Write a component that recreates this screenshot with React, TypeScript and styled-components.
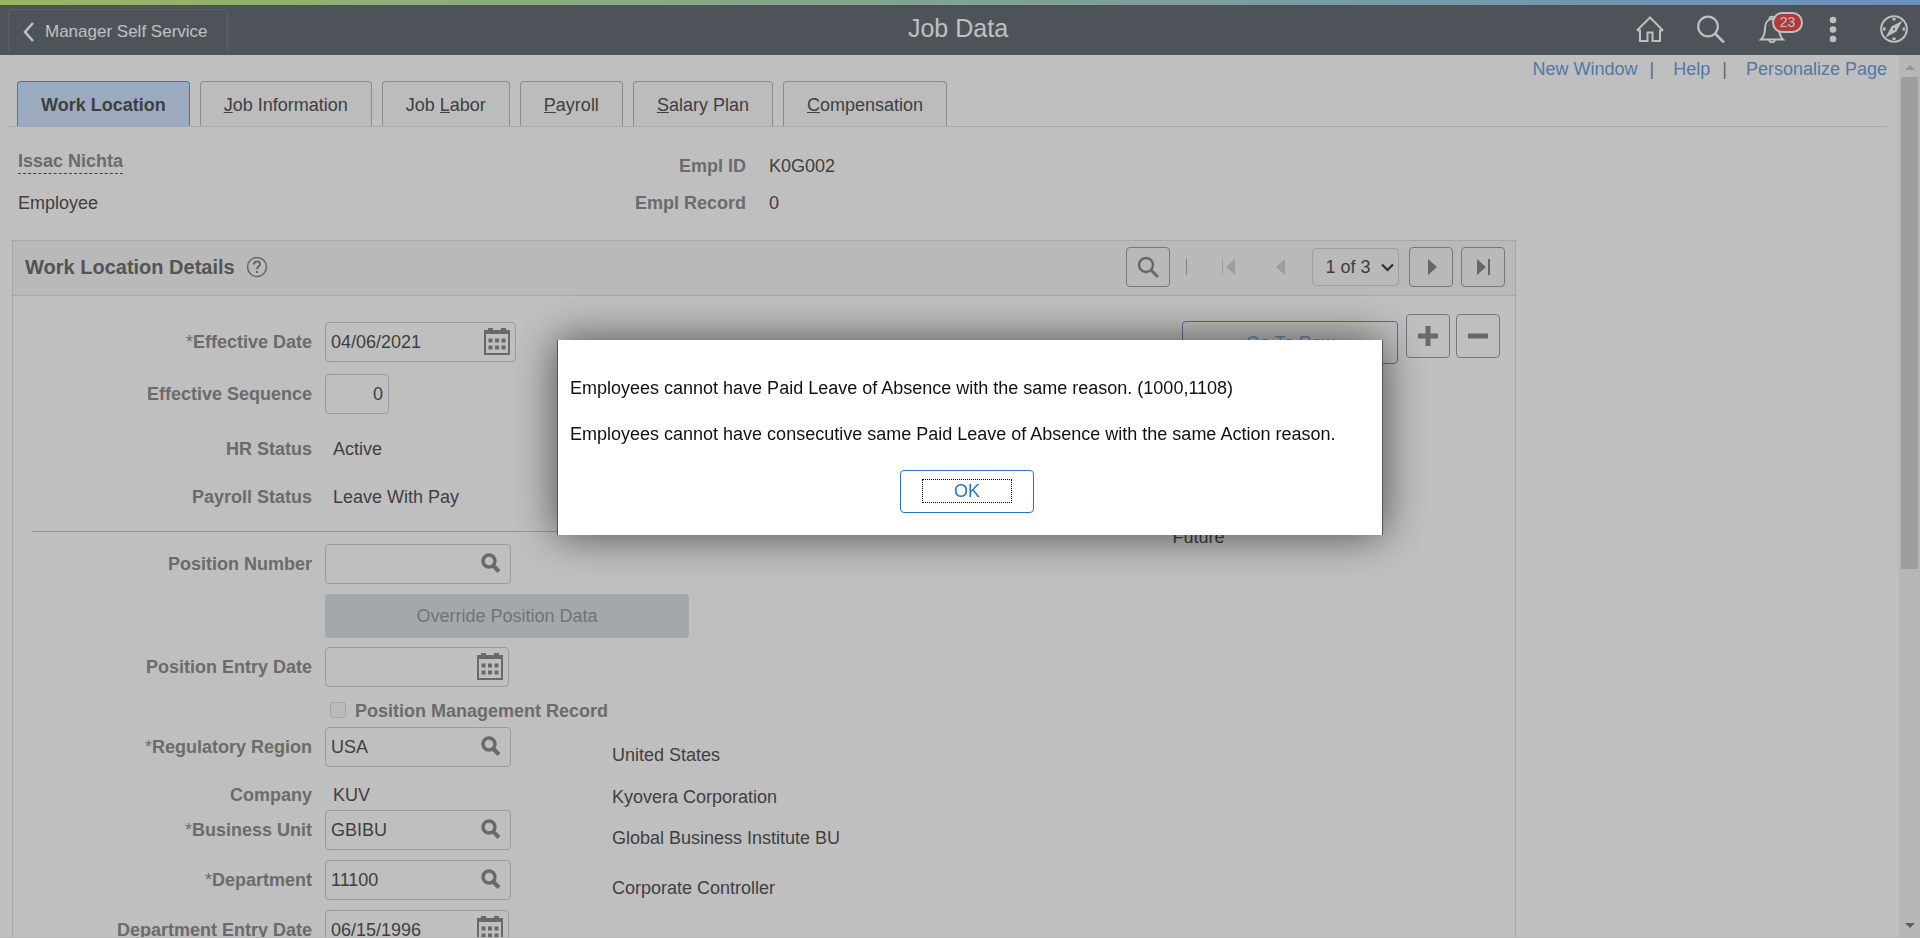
import React from "react";
import styled, { createGlobalStyle } from "styled-components";

const GlobalStyle = createGlobalStyle`
  *, *::before, *::after { box-sizing: border-box; }
  body {
    margin: 0;
    background: #fff;
    color: #555;
    font-family: "Liberation Sans", Arial, sans-serif;
    font-size: 18px;
    line-height: 24px;
  }
  button, input, select { font: inherit; color: inherit; }
  button { cursor: pointer; }
`;

const Shell = styled.div`
  display: flex;
  flex-direction: column;
  height: 100vh;
  overflow: hidden;
`;

const AccentStrip = styled.div`
  flex: none;
  height: 5px;
  background: linear-gradient(90deg, #c9f387, #8ec0ff);
`;

const Header = styled.header`
  flex: none;
  display: grid;
  grid-template-columns: 1fr auto 1fr;
  align-items: center;
  height: 50px;
  padding: 0 12px 0 8px;
  background: #686f78;
  color: #fff;
`;

const BackButton = styled.button`
  justify-self: start;
  display: flex;
  align-items: center;
  gap: 10px;
  height: 42px;
  padding: 3px 19px 0 14px;
  background: transparent;
  border: 1px solid #7b7f84;
  border-bottom: 0;
  border-radius: 4px 4px 0 0;
  font-size: 17px;
`;

const PageTitle = styled.h1`
  margin: 0;
  padding-bottom: 4px;
  font-size: 25px;
  font-weight: 400;
  line-height: 30px;
`;

const HeaderActions = styled.nav`
  justify-self: end;
  display: flex;
  gap: 33px;
  padding-bottom: 2px;
`;

const HeaderButton = styled.button`
  position: relative;
  display: flex;
  align-items: center;
  justify-content: center;
  width: 28px;
  height: 28px;
  padding: 0;
  background: none;
  border: 0;
`;

const Badge = styled.span`
  position: absolute;
  top: -3px;
  left: 14px;
  width: 31px;
  height: 21px;
  border: 2px solid #fff;
  border-radius: 11px;
  background: #ee4c4c;
  font-size: 14px;
  line-height: 17px;
  text-align: center;
`;

const Workspace = styled.div`
  flex: 1;
  min-height: 0;
  display: flex;
  border-bottom: 1px solid #f2f2f2;
`;

const Content = styled.main`
  flex: 1;
  min-width: 0;
  overflow: hidden;
  padding: 0 12px 0 9px;
`;

const ScrollTrack = styled.div`
  flex: none;
  display: flex;
  flex-direction: column;
  align-items: center;
  justify-content: space-between;
  width: 21px;
  padding: 10px 2px 9px;
  background: #f4f4f4;
`;

const ScrollThumb = styled.div`
  width: 17px;
  height: 57%;
  margin: 7px 0 auto;
  background: #d3d3d3;
`;

const PageLinks = styled.div`
  display: flex;
  justify-content: flex-end;
  height: 26px;
  padding-top: 2px;
`;

const PageLink = styled.a`
  color: #709fe0;
  text-decoration: none;
  &:not(:last-child)::after {
    content: "|";
    padding: 0 19px 0 12px;
    color: #8a8a8a;
  }
`;

const TabBar = styled.div`
  display: flex;
  gap: 10px;
  padding-left: 8px;
  border-bottom: 1px solid #e0e0e0;
`;

const Tab = styled.button<{ $active?: boolean }>`
  height: 45px;
  padding: 2px 23px 0;
  border: 1px solid ${(p) => (p.$active ? "#659bd5" : "#bababa")};
  border-bottom: 0;
  border-radius: 4px 4px 0 0;
  background: ${(p) => (p.$active ? "#cfe4fc" : "#fbfbfb")};
  font-weight: ${(p) => (p.$active ? 700 : 400)};
`;

const Identity = styled.section`
  display: grid;
  grid-template-columns: 600px 128px auto;
  justify-content: start;
  row-gap: 8px;
  height: 113px;
  padding: 22px 0 0 9px;
  align-content: start;
  align-items: start;
`;

const PersonName = styled.span`
  justify-self: start;
  border-bottom: 1px dashed #555;
  color: #8f8f8f;
  font-weight: 700;
`;

const IdentityText = styled.span<{ $label?: boolean }>`
  padding-top: 5px;
  color: ${(p) => (p.$label ? "#8f8f8f" : "#555")};
  font-weight: ${(p) => (p.$label ? 700 : 400)};
  text-align: ${(p) => (p.$label ? "right" : "left")};
  padding-left: ${(p) => (p.$label ? 0 : 23)}px;
`;

const JobType = styled.span`
  padding-top: 5px;
`;

const Panel = styled.section`
  width: calc(80% + 2px);
  margin-left: 3px;
  border: 1px solid #e1e1e1;
`;

const PanelHeader = styled.div`
  display: flex;
  align-items: center;
  height: 55px;
  padding: 0 10px 2px 12px;
  background: #f7f7f7;
  border-bottom: 1px solid #e1e1e1;
`;

const PanelTitle = styled.h2`
  margin: 0 11px 0 0;
  color: #717171;
  font-size: 20px;
`;

const HelpButton = styled.button`
  display: flex;
  margin-right: auto;
  padding: 0;
  background: none;
  border: 0;
`;

const Pager = styled.div`
  display: flex;
  align-items: center;
`;

const SquareButton = styled.button<{ $tall?: boolean }>`
  display: flex;
  align-items: center;
  justify-content: center;
  width: 44px;
  height: ${(p) => (p.$tall ? 44 : 40)}px;
  padding: 0;
  border: 1px solid #9ca0a7;
  border-radius: 4px;
  background: transparent;
`;

const PagerDivider = styled.span`
  width: 1px;
  height: 16px;
  margin: 0 34px 0 16px;
  background: #b5b0a8;
`;

const PlainButton = styled.button`
  display: flex;
  width: 15px;
  margin-right: 35px;
  padding: 0;
  background: none;
  border: 0;
`;

const SelectWrap = styled.label`
  position: relative;
  display: flex;
  align-items: center;
  margin: 0 10px 0 -9px;
`;

const RowSelect = styled.select`
  appearance: none;
  width: 87px;
  height: 38px;
  padding: 0 0 0 12px;
  border: 1px solid #d3d3da;
  border-radius: 4px;
  background: transparent;
`;

const Chevron = styled.svg`
  position: absolute;
  right: 5px;
  pointer-events: none;
`;

const LastButton = styled(SquareButton)`
  margin-left: 8px;
`;

const PanelBody = styled.div`
  display: grid;
  grid-template-columns: 1fr auto;
  padding: 26px 15px 0 19px;
`;

const Form = styled.form`
  display: flex;
  flex-direction: column;
  min-width: 0;
`;

const Row = styled.div<{ $gap: number; $height?: number }>`
  display: grid;
  grid-template-columns: 280px 287px auto;
  align-items: center;
  justify-content: start;
  height: ${(p) => p.$height ?? 40}px;
  margin-top: ${(p) => p.$gap}px;
`;

const FieldLabel = styled.label`
  color: #8f8f8f;
  font-weight: 700;
  text-align: right;
`;

const FieldCell = styled.div`
  padding-left: 13px;
  white-space: nowrap;
`;

const FieldValue = styled.span`
  padding-left: 8px;
`;

const Required = styled.span`
  font-weight: 400;
`;

const Description = styled.span`
  align-self: end;
  padding-left: 13px;
`;

const InputBox = styled.div<{ $width: number; $pad: number }>`
  display: flex;
  align-items: center;
  width: ${(p) => p.$width}px;
  height: 40px;
  padding: 0 ${(p) => p.$pad}px 0 5px;
  border: 1px solid #cdcfd7;
  border-radius: 4px;
`;

const TextInput = styled.input<{ $right?: boolean }>`
  flex: 1;
  min-width: 0;
  width: 100%;
  padding: 0;
  border: 0;
  outline: 0;
  background: transparent;
  text-align: ${(p) => (p.$right ? "right" : "left")};
`;

const PromptButton = styled.button`
  display: flex;
  padding: 0 0 2px;
  background: none;
  border: 0;
`;

const Divider = styled.hr`
  width: 100%;
  margin: 14px 0 0;
  border: 0;
  border-top: 1px solid #c4c4c4;
`;

const OverrideButton = styled.button`
  width: 364px;
  height: 44px;
  border: 0;
  border-radius: 4px;
  background: #dbe0e4;
  color: #949ba0;
`;

const CheckLabel = styled.label`
  display: flex;
  align-items: center;
  gap: 9px;
  padding-left: 5px;
  color: #8f8f8f;
  font-weight: 700;
`;

const Checkbox = styled.input`
  appearance: none;
  flex: none;
  width: 16px;
  height: 16px;
  margin: 0 0 2px;
  border: 1px solid #dcdcdc;
  border-radius: 3px;
  background: #fafafa;
`;

const Aside = styled.aside`
  display: flex;
  flex-direction: column;
  width: 328px;
  margin-top: -8px;
`;

const AsideActions = styled.div`
  display: flex;
  gap: 6px;
  margin-left: 10px;
`;

const GoToRow = styled.button`
  flex: 1;
  height: 43px;
  margin: 7px 2px 0 0;
  border: 1px solid #659bd5;
  border-radius: 4px;
  background: transparent;
  color: #8db2e2;
`;

const Timing = styled.span`
  margin-top: 161px;
`;

const Backdrop = styled.div`
  position: fixed;
  inset: 0;
  display: flex;
  align-items: flex-start;
  justify-content: center;
  padding: 340px 0 0 20px;
  background: rgba(0, 0, 0, 0.25);
`;

const Dialog = styled.div`
  width: 826px;
  padding: 36px 12px 22px;
  border: solid #555;
  border-width: 0 1px;
  background: #fff;
  box-shadow: 0 0 40px rgba(0, 0, 0, 0.6);
  color: #111;
`;

const Message = styled.p`
  margin: 0 0 22px;
  white-space: nowrap;
`;

const DialogFooter = styled.div`
  display: flex;
  justify-content: center;
  padding: 2px 6px 0 0;
`;

const OkButton = styled.button`
  width: 134px;
  height: 43px;
  padding: 0 21px 2px;
  border: 1px solid #2b73c8;
  border-radius: 4px;
  background: #fff;
  color: #2b73c8;
`;

const FocusRing = styled.span`
  display: block;
  border: 1px dotted #000;
  line-height: 22px;
`;

const CalendarIcon = () => (
  <svg width="26" height="27" viewBox="0 0 26 27" aria-hidden="true">
    <rect x="1" y="4" width="24" height="22" fill="none" stroke="#8c8c8c" strokeWidth="2" />
    <path d="M0 2h4V0h5v2h8V0h5v2h4v4H0z" fill="#8c8c8c" />
    <path d="M4.500 10.500h4v4h-4zM11 10.500h4v4h-4zM17.500 10.500h4v4h-4zM4.500 17.500h4v4h-4zM11 17.500h4v4h-4zM17.500 17.500h4v4h-4z" fill="#8c8c8c" />
  </svg>
);

const LookupIcon = () => (
  <svg width="20" height="20" viewBox="0 0 20 20" fill="none" stroke="#8c8c8c" aria-hidden="true">
    <circle cx="8" cy="8" r="6" strokeWidth="3.4" />
    <path d="M12 12.5l6 6" strokeWidth="4" />
  </svg>
);

const ArrowIcon = ({ left, bar, faded }: { left?: boolean; bar?: boolean; faded?: boolean }) => (
  <svg width="15" height="16" viewBox="0 0 15 16" fill={faded ? "#d2d2d2" : "#8a8a8a"} aria-hidden="true">
    {left ? <path d="M14 0v16L5 8z" /> : <path d={bar ? "M1 0v16l9-8z" : "M4 0v16l9-8z"} />}
    {bar && <rect x={left ? 1 : 12} y="0" width={left ? 1 : 2} height="16" />}
  </svg>
);

const Title = ({ text, accessKey }: { text: string; accessKey: string }) => {
  const at = text.indexOf(accessKey);
  return (
    <>
      {text.slice(0, at)}
      <u>{accessKey}</u>
      {text.slice(at + 1)}
    </>
  );
};

type FieldProps = {
  id: string;
  label: string;
  gap: number;
  kind: "date" | "lookup" | "number";
  value?: string;
  width: number;
  required?: boolean;
  note?: string;
};

const Field = ({ id, label, gap, kind, value = "", width, required, note }: FieldProps) => (
  <Row $gap={gap}>
    <FieldLabel htmlFor={id}>
      {required && <Required>*</Required>}
      {label}
    </FieldLabel>
    <FieldCell>
      <InputBox $width={width} $pad={kind === "lookup" ? 9 : 5}>
        <TextInput id={id} defaultValue={value} $right={kind === "number"} />
        {kind !== "number" && (
          <PromptButton type="button" aria-label={`Choose ${label}`}>
            {kind === "date" ? <CalendarIcon /> : <LookupIcon />}
          </PromptButton>
        )}
      </InputBox>
    </FieldCell>
    {note && <Description>{note}</Description>}
  </Row>
);

const StaticField = ({ label, value, gap, height, note }: { label: string; value: string; gap: number; height?: number; note?: string }) => (
  <Row $gap={gap} $height={height}>
    <FieldLabel as="span">{label}</FieldLabel>
    <FieldCell>
      <FieldValue>{value}</FieldValue>
    </FieldCell>
    {note && <Description>{note}</Description>}
  </Row>
);

const tabs = [
  ["Job Information", "J"],
  ["Job Labor", "L"],
  ["Payroll", "P"],
  ["Salary Plan", "S"],
  ["Compensation", "C"],
];

export default function App() {
  return (
    <>
      <GlobalStyle />
      <Shell>
        <AccentStrip />
        <Header>
          <BackButton>
            <svg width="12" height="20" viewBox="0 0 12 20" fill="none" stroke="#fff" strokeWidth="2.6" aria-hidden="true">
              <path d="M10 1L2 10l8 9" />
            </svg>
            Manager Self Service
          </BackButton>
          <PageTitle>Job Data</PageTitle>
          <HeaderActions aria-label="Tools">
            <HeaderButton aria-label="Home">
              <svg width="28" height="28" viewBox="0 0 28 28" fill="none" stroke="#fff" strokeWidth="2">
                <path d="M1 15.500L14 2.500l13 13M1 15.500h3V26h7.500v-8.500h5V26H24V15.500h3" />
              </svg>
            </HeaderButton>
            <HeaderButton aria-label="Search">
              <svg width="28" height="28" viewBox="0 0 28 28" fill="none" stroke="#fff" strokeWidth="2.2">
                <circle cx="11" cy="11.500" r="9.8" />
                <path d="M18 18.500l9 9" strokeWidth="2.600" />
              </svg>
            </HeaderButton>
            <HeaderButton aria-label="Notifications">
              <svg width="28" height="28" viewBox="0 0 28 28" fill="none" stroke="#fff" strokeWidth="2">
                <path d="M3 24.500c3-3 4-6 4-11C7 7.500 10 4 14 4s7 3.500 7 9.500c0 5 1 8 4 11z" />
                <path d="M11.500 4c0-3 5-3 5 0M11 25c1 3 5 3 6 0" />
              </svg>
              <Badge>23</Badge>
            </HeaderButton>
            <HeaderButton aria-label="Actions">
              <svg width="28" height="28" viewBox="0 0 28 28" fill="#fff">
                <circle cx="14" cy="5" r="3.300" />
                <circle cx="14" cy="14.500" r="3.300" />
                <circle cx="14" cy="24" r="3.300" />
              </svg>
            </HeaderButton>
            <HeaderButton aria-label="Navigator">
              <svg width="28" height="28" viewBox="0 0 28 28" fill="none" stroke="#fff" strokeWidth="2">
                <circle cx="14" cy="14" r="12.800" />
                <path d="M14 3v2.500M14 22.500V25M3 14h2.500M22.500 14H25" strokeWidth="3" />
                <path d="M22.500 5.500l-6 11-11 6 6-11z" fill="#fff" stroke="none" />
                <circle cx="14" cy="14" r="1" fill="#686f78" stroke="none" />
              </svg>
            </HeaderButton>
          </HeaderActions>
        </Header>
        <Workspace>
          <Content>
            <PageLinks>
              <PageLink href="#new">New Window</PageLink>
              <PageLink href="#help">Help</PageLink>
              <PageLink href="#personalize">Personalize Page</PageLink>
            </PageLinks>
            <TabBar role="tablist">
              <Tab role="tab" aria-selected="true" $active>
                Work Location
              </Tab>
              {tabs.map(([text, key]) => (
                <Tab role="tab" key={text}>
                  <Title text={text} accessKey={key} />
                </Tab>
              ))}
            </TabBar>
            <Identity>
              <PersonName>Issac Nichta</PersonName>
              <IdentityText $label>Empl ID</IdentityText>
              <IdentityText>K0G002</IdentityText>
              <JobType>Employee</JobType>
              <IdentityText $label>Empl Record</IdentityText>
              <IdentityText>0</IdentityText>
            </Identity>
            <Panel>
              <PanelHeader>
                <PanelTitle>Work Location Details</PanelTitle>
                <HelpButton aria-label="Help">
                  <svg width="22" height="22" viewBox="0 0 22 22" fill="none" stroke="#8a8a8a" strokeWidth="1.500">
                    <circle cx="11" cy="11" r="9.500" />
                    <path d="M8 8.500c0-4 6-4 6-.5 0 2.500-3 2.500-3 5.200" strokeWidth="2" />
                    <path d="M11 15v2" strokeWidth="2" />
                  </svg>
                </HelpButton>
                <Pager>
                  <SquareButton aria-label="Find">
                    <svg width="22" height="22" viewBox="0 0 22 22" fill="none" stroke="#8c8c8c" strokeWidth="2.500">
                      <circle cx="9" cy="9" r="7" />
                      <path d="M14 14l7 7" strokeWidth="3" />
                    </svg>
                  </SquareButton>
                  <PagerDivider />
                  <PlainButton aria-label="First row">
                    <ArrowIcon left bar faded />
                  </PlainButton>
                  <PlainButton aria-label="Previous row">
                    <ArrowIcon left faded />
                  </PlainButton>
                  <SelectWrap>
                    <RowSelect aria-label="Row" defaultValue="1 of 3">
                      <option>1 of 3</option>
                      <option>2 of 3</option>
                      <option>3 of 3</option>
                    </RowSelect>
                    <Chevron width="13" height="9" viewBox="0 0 13 9" fill="none" stroke="#444" strokeWidth="2.200">
                      <path d="M1 1.500l5.500 5.500L12 1.500" />
                    </Chevron>
                  </SelectWrap>
                  <SquareButton aria-label="Next row">
                    <ArrowIcon />
                  </SquareButton>
                  <LastButton aria-label="Last row">
                    <ArrowIcon bar />
                  </LastButton>
                </Pager>
              </PanelHeader>
              <PanelBody>
                <Form>
                  <Field id="effdt" label="Effective Date" required kind="date" value="04/06/2021" width={191} gap={0} />
                  <Field id="effseq" label="Effective Sequence" kind="number" value="0" width={64} gap={12} />
                  <StaticField label="HR Status" value="Active" gap={15} />
                  <StaticField label="Payroll Status" value="Leave With Pay" gap={8} />
                  <Divider />
                  <Field id="position" label="Position Number" kind="lookup" width={186} gap={12} />
                  <Row $gap={10} $height={44}>
                    <span />
                    <FieldCell>
                      <OverrideButton type="button" disabled>
                        Override Position Data
                      </OverrideButton>
                    </FieldCell>
                  </Row>
                  <Field id="posentry" label="Position Entry Date" kind="date" width={184} gap={9} />
                  <Row $gap={12} $height={24}>
                    <span />
                    <FieldCell>
                      <CheckLabel>
                        <Checkbox type="checkbox" disabled />
                        Position Management Record
                      </CheckLabel>
                    </FieldCell>
                  </Row>
                  <Field id="region" label="Regulatory Region" required kind="lookup" value="USA" width={186} gap={4} note="United States" />
                  <StaticField label="Company" value="KUV" gap={14} height={28} note="Kyovera Corporation" />
                  <Field id="unit" label="Business Unit" required kind="lookup" value="GBIBU" width={186} gap={1} note="Global Business Institute BU" />
                  <Field id="dept" label="Department" required kind="lookup" value="11100" width={186} gap={10} note="Corporate Controller" />
                  <Field id="deptentry" label="Department Entry Date" kind="date" value="06/15/1996" width={184} gap={10} />
                </Form>
                <Aside>
                  <AsideActions>
                    <GoToRow>Go To Row</GoToRow>
                    <SquareButton $tall aria-label="Add row">
                      <svg width="20" height="20" viewBox="0 0 20 20" stroke="#8c8c8c" strokeWidth="5">
                        <path d="M0 10h20M10 0v20" />
                      </svg>
                    </SquareButton>
                    <SquareButton $tall aria-label="Delete row">
                      <svg width="20" height="20" viewBox="0 0 20 20" stroke="#8c8c8c" strokeWidth="5">
                        <path d="M0 10h20" />
                      </svg>
                    </SquareButton>
                  </AsideActions>
                  <Timing>Future</Timing>
                </Aside>
              </PanelBody>
            </Panel>
          </Content>
          <ScrollTrack>
            <svg width="10" height="5" viewBox="0 0 10 5" fill="#c4c4c4">
              <path d="M0 5l5-5 5 5z" />
            </svg>
            <ScrollThumb />
            <svg width="10" height="5" viewBox="0 0 10 5" fill="#7c7c7c">
              <path d="M0 0h10L5 5z" />
            </svg>
          </ScrollTrack>
        </Workspace>
      </Shell>
      <Backdrop>
        <Dialog role="alertdialog" aria-modal="true" aria-label="Message">
          <Message>Employees cannot have Paid Leave of Absence with the same reason. (1000,1108)</Message>
          <Message>Employees cannot have consecutive same Paid Leave of Absence with the same Action reason.</Message>
          <DialogFooter>
            <OkButton>
              <FocusRing>OK</FocusRing>
            </OkButton>
          </DialogFooter>
        </Dialog>
      </Backdrop>
    </>
  );
}
